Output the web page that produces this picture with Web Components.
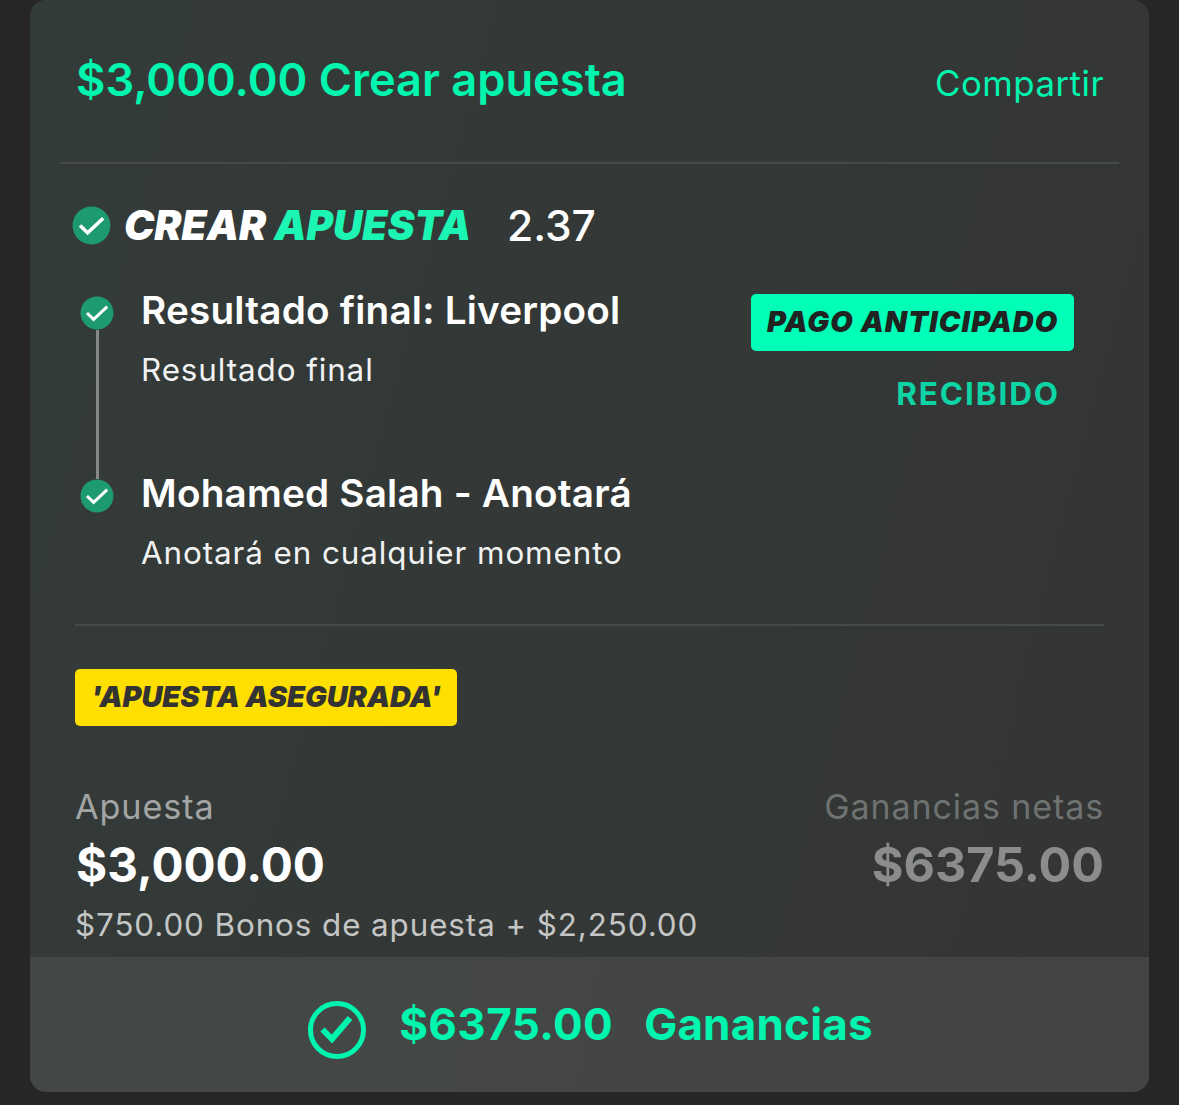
<!DOCTYPE html>
<html lang="es">
<head>
<meta charset="utf-8">
<title>Crear apuesta</title>
<style>
html, body { margin: 0; background: #262626; }
body { font-family: Inter, "Liberation Sans", sans-serif; color: #fff; }
</style>
</head>
<body>

<template id="dot-tpl">
  <style>
    :host { display: block; width: var(--size, 34px); height: var(--size, 34px); flex: none; }
    svg { display: block; width: 100%; height: 100%; }
  </style>
  <svg viewBox="0 0 34 34">
    <circle cx="17" cy="17" r="16.5" fill="#1d9a70"/>
    <path d="M7 17l6.6 6.4L27.2 10.6" fill="none" stroke="#fff" stroke-width="3"/>
  </svg>
</template>

<template id="badge-tpl">
  <style>
    :host {
      display: inline-block; box-sizing: border-box; height: 57px; line-height: 56px;
      padding: 0 16px; border-radius: 5px; background: var(--bg, #00ffb7); color: var(--fg, #1f2322);
      font-family: Inter, "Liberation Sans", sans-serif; font-weight: 900; font-style: italic;
      font-size: 29px; letter-spacing: var(--ls, 1.1px); white-space: nowrap;
    }
  </style>
  <slot></slot>
</template>

<template id="leg-tpl">
  <style>
    :host { display: flex; padding-left: 5px; }
    .rail { display: flex; flex-direction: column; align-items: center; width: 34px; margin-right: 27px; }
    .line { flex: 1; width: 3px; background: #858988; }
    .text { flex: 1; }
    .name { font-size: 38.7px; font-weight: 600; line-height: 44px; margin-top: -8px; letter-spacing: .2px; white-space: nowrap; }
    .sub { font-size: 31.4px; line-height: 40px; margin-top: 18px; letter-spacing: .9px; color: #f1f2f2; white-space: nowrap; }
    :host([last]) .line { display: none; }
    :host(:not([last])) { height: 183px; }
  </style>
  <div class="rail"><check-dot></check-dot><div class="line"></div></div>
  <div class="text">
    <div class="name"><slot name="name"></slot></div>
    <div class="sub"><slot name="sub"></slot></div>
  </div>
  <slot name="aside"></slot>
</template>

<template id="amount-tpl">
  <style>
    :host { display: block; }
    :host([end]) { text-align: right; }
    .label { font-size: var(--label-size, 34.2px); line-height: 40px; letter-spacing: .9px; color: var(--label, #a2a5a4); }
    .value { font-size: var(--value-size, 47.6px); line-height: 60px; margin-top: 8px; font-weight: 700; color: var(--value, #fff); }
    :host(:not([end])) .value { margin-left: 1px; }
  </style>
  <div class="label"><slot name="label"></slot></div>
  <div class="value"><slot name="value"></slot></div>
  <slot name="note"></slot>
</template>

<template id="header-tpl">
  <style>
    :host {
      display: flex; justify-content: space-between; box-sizing: border-box; height: 164px;
      margin: 0 30px; padding: 53px 15px 0 16px; border-bottom: 2px solid #464b49; color: #00f5ae;
      align-items: flex-start;
    }
    .title { font-size: 45.2px; line-height: 54px; font-weight: 600; white-space: nowrap; }
    .share { font-size: 34.8px; line-height: 54px; margin-top: 3px; letter-spacing: .5px; white-space: nowrap; }
  </style>
  <div class="title"><slot name="title"></slot></div>
  <div class="share"><slot name="share"></slot></div>
</template>

<template id="footer-tpl">
  <style>
    :host {
      display: flex; align-items: center; justify-content: center; height: 135px; padding-left: 2px;
      background: linear-gradient(100deg, #434846, #444444); color: #00f5ae;
      font-size: 44px; font-weight: 700; border-radius: 0 0 16px 16px;
    }
    svg { width: 58px; height: 58px; margin: 11px 33px 0 0; flex: none; }
    .gap { width: 31px; }
    span { white-space: nowrap; letter-spacing: .4px; margin-top: -2px; }
    .label { letter-spacing: .2px; }
  </style>
  <svg viewBox="0 0 58 58" fill="none" stroke="#00f5ae">
    <circle cx="29" cy="29" r="26.5" stroke-width="5"/>
    <path d="M14.5 28.5l9.5 9.5L42 17" stroke-width="6"/>
  </svg>
  <span><slot name="amount"></slot></span>
  <div class="gap"></div>
  <span class="label"><slot name="label"></slot></span>
</template>

<template id="card-tpl">
  <style>
    :host {
      height: 1092px; margin: 0 30px; border-radius: 16px; overflow: hidden;
      background: linear-gradient(105deg, #333b39, #343534);
      display: flex; flex-direction: column;
    }
    .body { flex: 1; min-height: 0; }
  </style>
  <div class="body"><slot></slot></div>
  <slot name="footer"></slot>
</template>

<bet-card>
  <bet-header>
    <span slot="title">$3,000.00 Crear apuesta</span>
    <span slot="share">Compartir</span>
  </bet-header>

  <bet-title></bet-title>

  <section style="padding:44px 0 0;height:328px;border-bottom:2px solid #464b49;margin:0 45px">
    <bet-leg>
      <span slot="name">Resultado final: Liverpool</span>
      <span slot="sub">Resultado final</span>
      <div slot="aside" style="margin:-2px 30px 0 0;text-align:right;width:323px;flex:none">
        <bet-badge>PAGO ANTICIPADO</bet-badge>
        <div style="margin:26px 14px 0 0;font-size:31.5px;line-height:34px;font-weight:700;letter-spacing:1.9px;color:#0dd4a5">RECIBIDO</div>
      </div>
    </bet-leg>
    <bet-leg last>
      <span slot="name">Mohamed Salah - Anotará</span>
      <span slot="sub">Anotará en cualquier momento</span>
    </bet-leg>
  </section>

  <section style="padding:43px 45px 0 45px">
    <bet-badge style="--bg:#ffdf00;--fg:#333;--ls:-.05px">'APUESTA ASEGURADA'</bet-badge>
    <div style="display:flex;justify-content:space-between;margin-top:61px">
      <bet-amount>
        <span slot="label">Apuesta</span>
        <span slot="value">$3,000.00</span>
        <div slot="note" style="font-size:31.35px;line-height:40px;margin-top:10px;letter-spacing:.92px;color:#c4c6c5;white-space:nowrap">$750.00 Bonos de apuesta + $2,250.00</div>
      </bet-amount>
      <bet-amount end style="--label:#6e7271;--value:#8a8d8c;--value-size:48.5px;--label-size:34px">
        <span slot="label">Ganancias netas</span>
        <span slot="value">$6375.00</span>
      </bet-amount>
    </div>
  </section>

  <bet-footer slot="footer">
    <span slot="amount">$6375.00</span>
    <span slot="label">Ganancias</span>
  </bet-footer>
</bet-card>

<script>
function stamp(el, id) {
  el.attachShadow({ mode: "open" }).appendChild(document.getElementById(id).content.cloneNode(true));
}

class CheckDot extends HTMLElement {
  constructor() { super(); stamp(this, "dot-tpl"); }
}
class BetBadge extends HTMLElement {
  constructor() { super(); stamp(this, "badge-tpl"); }
}
class BetLeg extends HTMLElement {
  constructor() { super(); stamp(this, "leg-tpl"); }
}
class BetAmount extends HTMLElement {
  constructor() { super(); stamp(this, "amount-tpl"); }
}
class BetHeader extends HTMLElement {
  constructor() { super(); stamp(this, "header-tpl"); }
}
class BetFooter extends HTMLElement {
  constructor() { super(); stamp(this, "footer-tpl"); }
}
class BetCard extends HTMLElement {
  constructor() { super(); stamp(this, "card-tpl"); }
}
class BetTitle extends HTMLElement {
  constructor() {
    super();
    this.attachShadow({ mode: "open" }).innerHTML = `
      <style>
        :host { display: flex; align-items: center; height: 50px; padding: 36px 0 2px 42px; }
        check-dot { --size: 39px; margin-right: 13px; }
        b { font-family: Inter, "Liberation Sans", sans-serif; font-weight: 900; font-style: italic; font-size: 40.6px; white-space: nowrap; }
        i { font-style: inherit; color: #1df5b4; }
        span { font-size: 42.5px; margin-left: 36px; font-weight: 500; }
      </style>
      <check-dot></check-dot>
      <b>CREAR <i>APUESTA</i></b>
      <span>2.37</span>`;
  }
}

customElements.define("check-dot", CheckDot);
customElements.define("bet-badge", BetBadge);
customElements.define("bet-leg", BetLeg);
customElements.define("bet-amount", BetAmount);
customElements.define("bet-header", BetHeader);
customElements.define("bet-footer", BetFooter);
customElements.define("bet-card", BetCard);
customElements.define("bet-title", BetTitle);
</script>
</body>
</html>
